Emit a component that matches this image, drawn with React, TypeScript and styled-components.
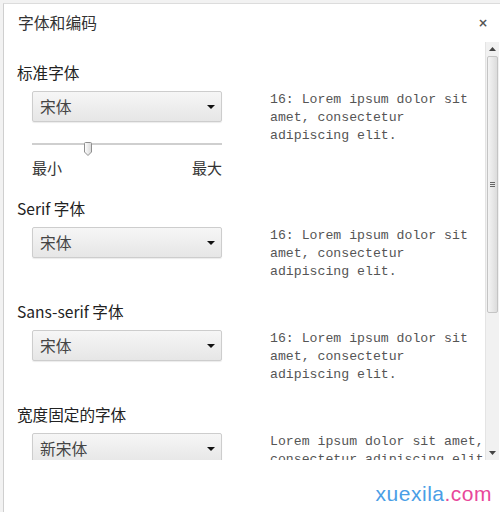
import React from "react";
import styled, { createGlobalStyle } from "styled-components";

const Global = createGlobalStyle`
  html, body { margin: 0; padding: 0; background: #f2f2f2; }
  body { width: 500px; height: 512px; overflow: hidden; font-family: "Noto Sans CJK SC", "Noto Sans", sans-serif; }
`;

const Dialog = styled.div`
  margin: 3px 0 0 3px;
  width: 497px;
  height: 509px;
  background: #fff;
  border-left: 1px solid #cfcfcf;
  border-top: 1px solid #dcdcdc;
  box-sizing: border-box;
  display: flex;
  flex-direction: column;
  position: relative;
`;

const Header = styled.div`
  height: 38px;
  display: flex;
  align-items: center;
  justify-content: space-between;
  padding: 0 12px 0 14px;
  flex: none;
`;

const Title = styled.div`
  font-size: 15.8px;
  color: #333;
  line-height: 20px;
`;

const Close = styled.div`
  font-family: "DejaVu Sans", sans-serif;
  font-size: 12px;
  font-weight: bold;
  color: #555;
`;

const Body = styled.div`
  height: 418px;
  display: flex;
  flex: none;
`;

const Content = styled.div`
  flex: 1;
  overflow: hidden;
  padding: 20px 0 0 13px;
  display: flex;
  flex-direction: column;
  gap: 20px;
`;

const Section = styled.div`
  display: flex;
  flex-direction: column;
  gap: 9px;
`;

const Heading = styled.div`
  font-size: 15.6px;
  line-height: 20px;
  color: #222;
`;

const Row = styled.div`
  display: flex;
  padding-left: 15px;
  gap: 48px;
`;

const LeftCol = styled.div`
  width: 190px;
  display: flex;
  flex-direction: column;
`;

const Select = styled.div`
  height: 31px;
  box-sizing: border-box;
  border: 1px solid #cdcdcd;
  border-radius: 2px;
  background: linear-gradient(#f6f6f6, #e6e6e6);
  box-shadow: 0 1px 1px rgba(0,0,0,0.08);
  display: flex;
  align-items: center;
  justify-content: space-between;
  padding: 0 6px 0 7px;
  font-size: 15.8px;
  color: #444;
`;

const Caret = styled.span`
  width: 0;
  height: 0;
  border-left: 4px solid transparent;
  border-right: 4px solid transparent;
  border-top: 4px solid #111;
`;

const Slider = styled.div`
  margin-top: 14px;
  height: 16px;
  position: relative;
  display: flex;
  align-items: center;
`;

const Track = styled.div`
  height: 2px;
  width: 100%;
  background: #cfcfcf;
`;

const Thumb = styled.div`
  position: absolute;
  left: 52px;
  top: 1px;
  width: 8px;
  height: 14px;
`;

const Labels = styled.div`
  display: flex;
  justify-content: space-between;
  font-size: 15px;
  line-height: 20px;
  color: #333;
  margin-top: 6px;
`;

const Sample = styled.div<{ $nowrap?: boolean }>`
  font-family: "Liberation Mono", "DejaVu Sans Mono", monospace;
  font-size: 13.2px;
  line-height: 18px;
  color: #555;
  width: 200px;
  white-space: ${(p) => (p.$nowrap ? "nowrap" : "normal")};
`;

const Scrollbar = styled.div`
  width: 13px;
  margin-right: 1px;
  background: #f1f1f1;
  border-left: 1px solid #e4e4e4;
  display: flex;
  flex-direction: column;
  flex: none;
`;

const ArrowBtn = styled.div`
  height: 14px;
  display: flex;
  align-items: center;
  justify-content: center;
  flex: none;
`;

const ScrollThumb = styled.div`
  height: 255px;
  margin: 0 1px;
  border: 1px solid #c4c4c4;
  border-radius: 2px;
  background: linear-gradient(to right, #f4f4f4, #dcdcdc);
  display: flex;
  align-items: center;
  justify-content: center;
  flex: none;
`;

const Grip = styled.div`
  width: 5px;
  height: 5px;
  background: repeating-linear-gradient(#666 0 1px, transparent 1px 2px);
`;

const Spacer = styled.div`
  flex: 1;
`;

const Footer = styled.div`
  flex: 1;
  display: flex;
  align-items: flex-end;
  justify-content: flex-end;
  padding: 0 8px 6px 0;
`;

const Mark = styled.div`
  font-family: "Liberation Sans", Arial, sans-serif;
  font-size: 21px;
  letter-spacing: 0.5px;
  line-height: 24px;
`;

const Blue = styled.span`
  color: #4a9ee6;
`;
const Pink = styled.span`
  color: #e8479a;
`;

const lorem = "16: Lorem ipsum dolor sit amet, consectetur adipiscing elit.";

const SelectBox = ({ value }: { value: string }) => (
  <Select>
    <span>{value}</span>
    <Caret />
  </Select>
);

export default function App() {
  return (
    <>
      <Global />
      <Dialog>
        <Header>
          <Title>字体和编码</Title>
          <Close>×</Close>
        </Header>
        <Body>
          <Content>
            <Section>
              <Heading>标准字体</Heading>
              <Row>
                <LeftCol>
                  <SelectBox value="宋体" />
                  <Slider>
                    <Track />
                    <Thumb>
                      <svg width="8" height="14" viewBox="0 0 8 14">
                        <defs>
                          <linearGradient id="tg" x1="0" x2="1">
                            <stop offset="0" stopColor="#ffffff" />
                            <stop offset="1" stopColor="#d8d8d8" />
                          </linearGradient>
                        </defs>
                        <path d="M0.5 1.5 Q0.5 0.5 1.5 0.5 H6.5 Q7.5 0.5 7.5 1.5 V10 L4 13.5 L0.5 10 Z" fill="url(#tg)" stroke="#8f8f8f" strokeWidth="1" />
                      </svg>
                    </Thumb>
                  </Slider>
                  <Labels>
                    <span>最小</span>
                    <span>最大</span>
                  </Labels>
                </LeftCol>
                <Sample>{lorem}</Sample>
              </Row>
            </Section>
            <Section>
              <Heading>Serif 字体</Heading>
              <Row>
                <LeftCol>
                  <SelectBox value="宋体" />
                </LeftCol>
                <Sample>{lorem}</Sample>
              </Row>
            </Section>
            <Section>
              <Heading>Sans-serif 字体</Heading>
              <Row>
                <LeftCol>
                  <SelectBox value="宋体" />
                </LeftCol>
                <Sample>{lorem}</Sample>
              </Row>
            </Section>
            <Section>
              <Heading>宽度固定的字体</Heading>
              <Row>
                <LeftCol>
                  <SelectBox value="新宋体" />
                </LeftCol>
                <Sample $nowrap>
                  Lorem ipsum dolor sit amet,
                  <br />
                  consectetur adipiscing elit.
                </Sample>
              </Row>
            </Section>
          </Content>
          <Scrollbar>
            <ArrowBtn>
              <svg width="7" height="4" viewBox="0 0 7 4"><path d="M0 4 L3.5 0 L7 4 Z" fill="#444" /></svg>
            </ArrowBtn>
            <ScrollThumb>
              <Grip />
            </ScrollThumb>
            <Spacer />
            <ArrowBtn>
              <svg width="7" height="4" viewBox="0 0 7 4"><path d="M0 0 L3.5 4 L7 0 Z" fill="#444" /></svg>
            </ArrowBtn>
          </Scrollbar>
        </Body>
        <Footer>
          <Mark>
            <Blue>xuexila</Blue>
            <Pink>.com</Pink>
          </Mark>
        </Footer>
      </Dialog>
    </>
  );
}
